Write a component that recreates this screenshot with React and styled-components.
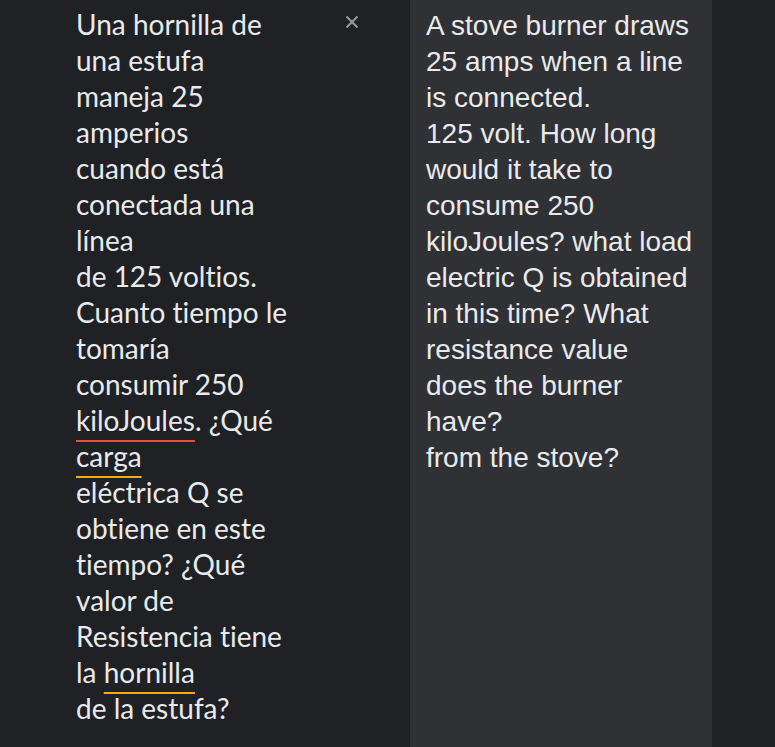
import React from "react";
import styled, { createGlobalStyle } from "styled-components";

const Global = createGlobalStyle`
  html, body { margin: 0; padding: 0; background: #202124; }
  body { overflow: hidden; }
`;

const Page = styled.div`
  display: flex;
  align-items: stretch;
  height: 100vh;
  overflow: hidden;
  background: #202124;
`;

const Source = styled.div`
  display: flex;
  align-items: flex-start;
  padding: 6px 0 0 76px;
  width: 364px;
  flex-shrink: 0;
  box-sizing: border-box;
`;

const SourceText = styled.div`
  flex: 1;
  font-family: Lato, "Open Sans", sans-serif;
  font-size: 28px;
  line-height: 36px;
  color: #e8eaed;
  white-space: pre;
  font-variant-ligatures: none;
  font-feature-settings: "liga" 0;
`;

const Marked = styled.span`
  text-decoration: underline;
  text-decoration-color: ${(p) => p.$color};
  text-decoration-thickness: 2px;
  text-underline-offset: 9px;
`;

const Close = styled.button`
  width: 24px;
  height: 24px;
  margin: 4px 0 0 0;
  padding: 0;
  border: 0;
  background: transparent;
  display: flex;
  align-items: center;
  justify-content: center;
  color: #9aa0a6;
  cursor: pointer;
`;

const Target = styled.div`
  margin: -6px 0 -8px 46px;
  width: 302px;
  flex-shrink: 0;
  box-sizing: border-box;
  padding: 14px 16px 0 16px;
  background: #303134;
  border-radius: 8px;
  font-family: "Liberation Sans", Arial, sans-serif;
  font-size: 28px;
  line-height: 36px;
  color: #e8eaed;
  white-space: pre;
`;

export default function App() {
  return (
    <Page>
      <Global />
      <Source>
        <SourceText>
          {"Una hornilla de\nuna estufa\nmaneja 25\namperios\ncuando está\nconectada una\nlínea\nde 125 voltios.\nCuanto tiempo le\ntomaría\nconsumir 250\n"}
          <Marked $color="#ea4e45">kiloJoules</Marked>
          {". ¿Qué\n"}
          <Marked $color="#f9ab00">carga</Marked>
          {"\neléctrica Q se\nobtiene en este\ntiempo? ¿Qué\nvalor de\nResistencia tiene\nla "}
          <Marked $color="#f9ab00">hornilla</Marked>
          {"\nde la estufa?"}
        </SourceText>
        <Close aria-label="Borrar">
          <svg width="14" height="14" viewBox="0 0 14 14">
            <path d="M1.5 1.5L12.5 12.5M12.5 1.5L1.5 12.5" stroke="currentColor" strokeWidth="1.8" fill="none" />
          </svg>
        </Close>
      </Source>
      <Target>
        {"A stove burner draws\n25 amps when a line\nis connected.\n125 volt. How long\nwould it take to\nconsume 250\nkiloJoules? what load\nelectric Q is obtained\nin this time? What\nresistance value\ndoes the burner\nhave?\nfrom the stove?"}
      </Target>
    </Page>
  );
}
